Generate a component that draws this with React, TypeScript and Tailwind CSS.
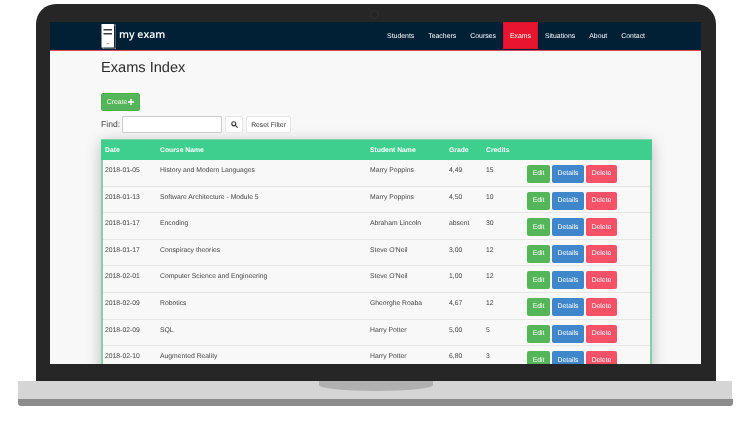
import React from "react";

const rows = [
  ["2018-01-05", "History and Modern Languages", "Marry Poppins", "4,49", "15"],
  ["2018-01-13", "Software Architecture - Module 5", "Marry Poppins", "4,50", "10"],
  ["2018-01-17", "Encoding", "Abraham Lincoln", "absent", "30"],
  ["2018-01-17", "Conspiracy theories", "Steve O'Neil", "3,00", "12"],
  ["2018-02-01", "Computer Science and Engineering", "Steve O'Neil", "1,00", "12"],
  ["2018-02-09", "Robotics", "Gheorghe Roaba", "4,67", "12"],
  ["2018-02-09", "SQL", "Harry Potter", "5,00", "5"],
  ["2018-02-10", "Augmented Reality", "Harry Potter", "6,80", "3"],
];

const navItems = ["Students", "Teachers", "Courses", "Exams", "Situations", "About", "Contact"];

function Logo() {
  return (
    <svg width="15" height="25" viewBox="0 0 15 25" className="shrink-0">
      <rect x="2" y="1" width="13" height="24" fill="#1b2a35" stroke="#cfd3d6" strokeWidth="0.6" />
      <rect x="0.5" y="0" width="12.5" height="23.5" fill="#ffffff" />
      <rect x="2.5" y="5" width="8.5" height="1.5" fill="#3a3a3a" />
      <rect x="2.5" y="9" width="8.5" height="1.5" fill="#3a3a3a" />
      <rect x="5.5" y="19" width="2.5" height="0.8" fill="#888888" />
    </svg>
  );
}

export default function App() {
  return (
    <div className="w-[750px] h-[422px] bg-white overflow-hidden pt-[4px] font-['Liberation_Sans',Arial,sans-serif] [text-rendering:geometricPrecision]">
      <div className="ml-[36px] w-[680px] h-[377px] rounded-t-[20px] bg-[#262626] pt-[18px] pl-[14px] pr-[15px] relative">
        <div className="absolute left-[334px] top-[6px] w-[9px] h-[9px] rounded-full border border-[#333333] bg-[#242424]" />
        <div className="w-[651px] h-[342px] bg-[#f8f8f8] overflow-hidden blur-[0.25px]">
          <div className="h-[29px] bg-[#012036] border-b border-[#e0455c] flex items-center pl-[51px] pr-[49px]">
            <Logo />
            <span className="ml-[3px] text-[10.5px] font-semibold font-['Open_Sans',sans-serif] text-white -mt-[1px]">my exam</span>
            <div className="ml-auto flex items-start h-[28px] text-[6.9px] text-white">
              {navItems.map((n) => (
                <span key={n} className={n === "Exams" ? "h-[27px] px-[6px] pt-[3px] bg-[#e9152f] flex items-center border border-[#d5132b]" : "h-[27px] px-[7px] pt-[3px] flex items-center"}>{n}</span>
              ))}
            </div>
          </div>

          <div className="pl-[51px] pr-[49px]">
            <h1 className="text-[14.6px] leading-[19px] text-[#2b2b2b] mt-[8px]">Exams Index</h1>
            <div className="mt-[15px] w-[39px] h-[18px] rounded-[2px] bg-[#55b559] border border-[#4cae4c] flex items-center justify-center gap-[1px] text-[6.8px] text-white">
              <span className="pt-[2px]">Create</span>
              <svg width="6" height="6" viewBox="0 0 7 7"><path d="M2.6 0h1.8v2.6H7v1.8H4.4V7H2.6V4.4H0V2.6h2.6z" fill="#fff" /></svg>
            </div>
            <div className="mt-[4px] flex items-center h-[19px] text-[#444444]">
              <span className="text-[8.6px] w-[21px]">Find:</span>
              <div className="w-[100px] h-[17px] bg-white border border-[#cccccc] rounded-[1px]" />
              <div className="ml-[3px] w-[18px] h-[17px] bg-white border border-[#e6e6e6] rounded-[2px] flex items-center justify-center">
                <svg width="7" height="7" viewBox="0 0 8 8" fill="none" stroke="#333" strokeWidth="1.3"><circle cx="3.2" cy="3.2" r="2.3" /><path d="M5 5l2.6 2.6" /></svg>
              </div>
              <div className="ml-[3px] w-[45px] h-[17px] pt-[3px] bg-white border border-[#e6e6e6] rounded-[2px] flex items-center justify-center text-[6.8px] text-[#333333]">Reset Filter</div>
            </div>

            <div className="mt-[5px] w-[551px] border-x-[2px] border-[#7fd3aa] shadow-[0_3px_14px_rgba(0,0,0,0.25)] bg-[#f8f8f8]">
              <div className="h-[21px] pt-[2px] bg-[#3ecf8e] flex items-center text-[6.8px] font-bold text-white -mx-[2px] border-t border-[#7fd3aa]">
                <span className="ml-[4px] w-[55px]">Date</span>
                <span className="w-[210px]">Course Name</span>
                <span className="w-[79px]">Student Name</span>
                <span className="w-[37px]">Grade</span>
                <span>Credits</span>
              </div>
              {rows.map((r) => (
                <div key={r[0] + r[1]} className="h-[26.6px] border-b border-[#e6e6e6] flex items-start text-[6.8px] text-[#444444]">
                  <span className="ml-[2px] w-[55px] mt-[6px] leading-[10px]">{r[0]}</span>
                  <span className="w-[210px] mt-[6px] leading-[10px]">{r[1]}</span>
                  <span className="w-[79px] mt-[6px] leading-[10px]">{r[2]}</span>
                  <span className="w-[37px] mt-[6px] leading-[10px]">{r[3]}</span>
                  <span className="w-[41px] mt-[6px] leading-[10px]">{r[4]}</span>
                  <div className="flex gap-[2px] mt-[5px] text-[6.8px] text-white">
                    <span className="w-[23px] h-[18px] pt-[1px] rounded-[2px] bg-[#55b559] flex items-center justify-center">Edit</span>
                    <span className="w-[32px] h-[18px] pt-[1px] rounded-[2px] bg-[#3f87ca] flex items-center justify-center">Details</span>
                    <span className="w-[31px] h-[18px] pt-[1px] rounded-[2px] bg-[#f55268] flex items-center justify-center">Delete</span>
                  </div>
                </div>
              ))}
            </div>
          </div>
        </div>
      </div>
      <div className="ml-[18px] w-[714px] h-[18px] bg-[#d5d5d5]">
        <div className="ml-[301px] w-[114px] h-[10px] bg-[#b0b0b0] rounded-b-[50%_60%]" />
      </div>
      <div className="ml-[18px] w-[715px] h-[7px] bg-[#8c8c8c] rounded-b-[3px]" />
    </div>
  );
}
